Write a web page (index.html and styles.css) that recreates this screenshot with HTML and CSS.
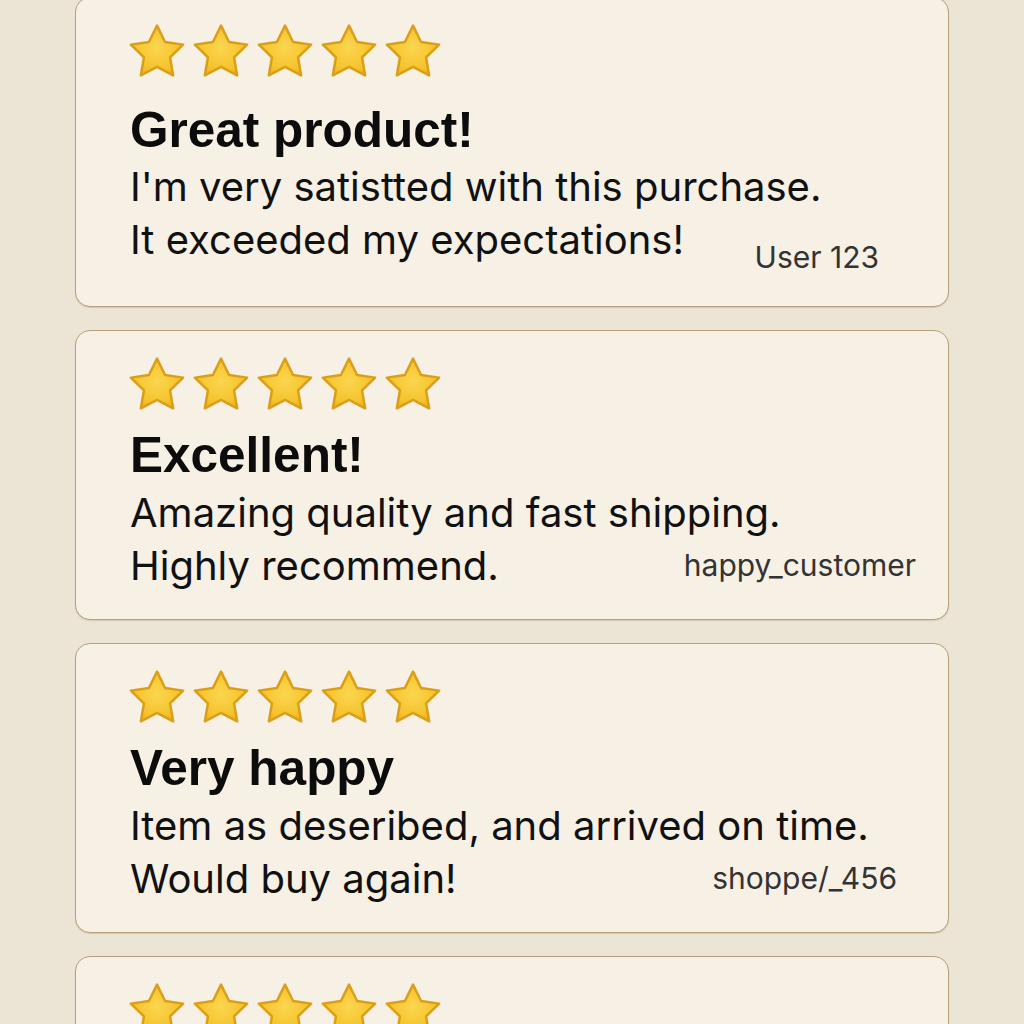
FILE: index.html
```html
<!DOCTYPE html>
<html lang="en">
<head>
<meta charset="utf-8">
<title>Reviews</title>
<link rel="stylesheet" href="styles.css">
</head>
<body>
<svg class="sprite" aria-hidden="true">
  <defs>
    <radialGradient id="starFill" cx="0.5" cy="0.45" r="0.6">
      <stop offset="0" stop-color="#fbd650"/>
      <stop offset="0.7" stop-color="#f5c42e"/>
      <stop offset="1" stop-color="#eeb21f"/>
    </radialGradient>
    <symbol id="star" viewBox="1.9 1.9 20.2 19.3">
      <path d="M12 2.5L14.94 8.46 21.51 9.41 16.76 14.05 17.88 20.59 12 17.5 6.12 20.59 7.24 14.05 2.49 9.41 9.06 8.46z" fill="url(#starFill)" stroke="#db9e17" stroke-width="0.9" stroke-linejoin="round"/>
    </symbol>
  </defs>
</svg>

<main class="reviews">
  <article class="card card--first">
    <div class="stars">
      <svg class="star"><use href="#star"/></svg>
      <svg class="star"><use href="#star"/></svg>
      <svg class="star"><use href="#star"/></svg>
      <svg class="star"><use href="#star"/></svg>
      <svg class="star"><use href="#star"/></svg>
    </div>
    <h2 class="title">Great product!</h2>
    <div class="foot">
      <p class="text">I'm very satistted with this purchase.<br>It exceeded my expectations!</p>
      <span class="author author--low">User 123</span>
    </div>
  </article>

  <article class="card">
    <div class="stars">
      <svg class="star"><use href="#star"/></svg>
      <svg class="star"><use href="#star"/></svg>
      <svg class="star"><use href="#star"/></svg>
      <svg class="star"><use href="#star"/></svg>
      <svg class="star"><use href="#star"/></svg>
    </div>
    <h2 class="title">Excellent!</h2>
    <div class="foot">
      <p class="text">Amazing quality and fast shipping.<br>Highly recommend.</p>
      <span class="author">happy_customer</span>
    </div>
  </article>

  <article class="card">
    <div class="stars">
      <svg class="star"><use href="#star"/></svg>
      <svg class="star"><use href="#star"/></svg>
      <svg class="star"><use href="#star"/></svg>
      <svg class="star"><use href="#star"/></svg>
      <svg class="star"><use href="#star"/></svg>
    </div>
    <h2 class="title">Very happy</h2>
    <div class="foot">
      <p class="text">Item as deseribed, and arrived on time.<br>Would buy again!</p>
      <span class="author author--mid">shoppe/_456</span>
    </div>
  </article>

  <article class="card">
    <div class="stars">
      <svg class="star"><use href="#star"/></svg>
      <svg class="star"><use href="#star"/></svg>
      <svg class="star"><use href="#star"/></svg>
      <svg class="star"><use href="#star"/></svg>
      <svg class="star"><use href="#star"/></svg>
    </div>
  </article>
</main>
</body>
</html>
```

FILE: styles.css
```css
html, body {
  margin: 0;
  padding: 0;
}

body {
  background: #ece4d5;
  height: 1024px;
  overflow: hidden;
  font-family: "Inter", "Liberation Sans", sans-serif;
  color: #111;
}

.sprite {
  position: absolute;
  width: 0;
  height: 0;
  overflow: hidden;
}

.reviews {
  width: 874px;
  margin: -3px auto 0;
  display: flex;
  flex-direction: column;
  gap: 23px;
}

.card {
  box-sizing: border-box;
  background: #f6f0e5;
  border: 1.5px solid #b9a07c;
  border-radius: 15px;
  box-shadow: 0 1px 1px rgba(120, 90, 50, 0.2);
  padding: 26px 32px 27px 53px;
}

.stars {
  display: flex;
  gap: 8px;
  height: 53px;
}

.star {
  width: 56px;
  height: 53px;
  flex: none;
}

.title {
  margin: 17px 0 0 1px;
  font-family: "Liberation Sans", Arial, sans-serif;
  font-weight: 700;
  font-size: 49.5px;
  line-height: 55px;
  color: #0c0c0c;
}

.foot {
  display: grid;
  grid-template-columns: 1fr auto;
  margin-top: 4px;
  margin-left: 1px;
}

.text {
  grid-area: 1 / 1 / 2 / 3;
  margin: 0;
  font-size: 40px;
  line-height: 53px;
  font-weight: 400;
  color: #111;
  white-space: nowrap;
}

.author {
  grid-area: 1 / 2 / 2 / 3;
  align-self: last baseline;
  font-size: 30px;
  line-height: 53px;
  color: #333;
  white-space: nowrap;
}

.author--low {
  align-self: end;
  line-height: 1;
  margin-bottom: -6px;
  margin-right: 37px;
}

.author--mid {
  margin-right: 19px;
}

.card--first .title {
  margin-top: 25px;
}

.card--first .foot {
  margin-top: 3px;
}

.card--first {
  padding-bottom: 40px;
}
```
